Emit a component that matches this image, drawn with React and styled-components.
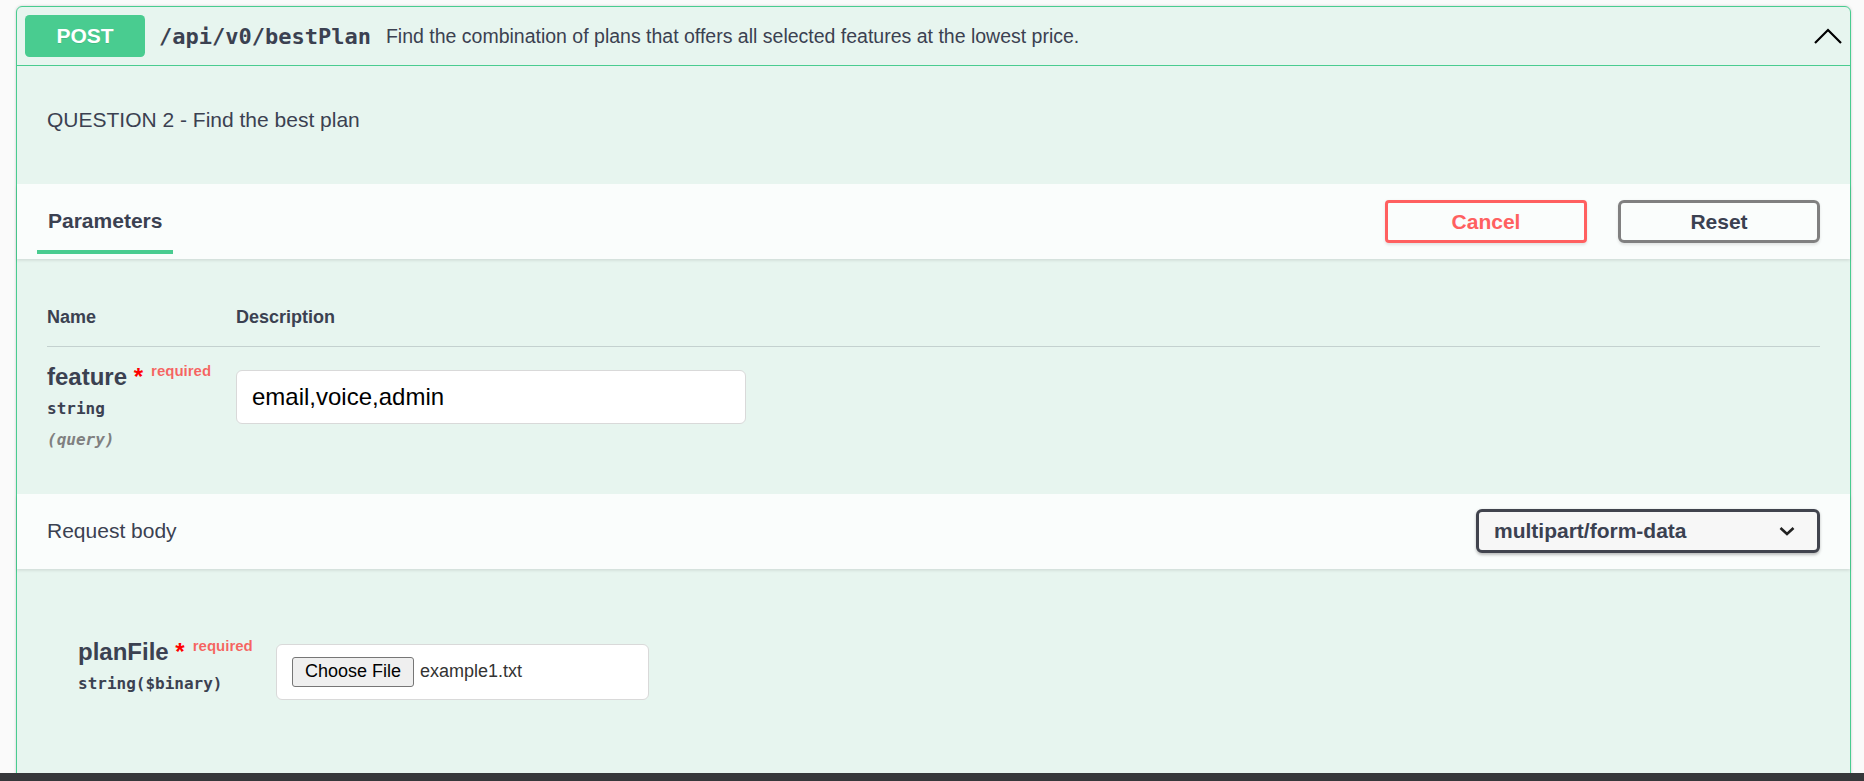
import React from 'react';
import styled, { createGlobalStyle } from 'styled-components';

const GlobalStyle = createGlobalStyle`
  html, body {
    margin: 0;
    background: #fafafa;
  }
  body {
    font-family: "Liberation Sans", Arial, sans-serif;
    color: #3b4151;
    overflow: hidden;
  }
  #root {
    padding: 6px 13px 0 16px;
  }
`;

const OpBlock = styled.div`
  border: 1px solid #49cc90;
  border-radius: 6px;
  background: rgba(73, 204, 144, 0.1);
  box-shadow: 0 0 3px rgba(0, 0, 0, 0.19);
  padding-bottom: 120px;
`;

const Summary = styled.div`
  display: flex;
  align-items: center;
  padding: 8px;
  border-bottom: 1px solid #49cc90;
`;

const Method = styled.span`
  display: flex;
  align-items: center;
  justify-content: center;
  width: 120px;
  height: 42px;
  border-radius: 4.5px;
  background: #49cc90;
  color: #fff;
  font-size: 21px;
  font-weight: 700;
  text-shadow: 0 1px 0 rgba(0, 0, 0, 0.1);
`;

const Path = styled.span`
  padding: 0 15px 0 14px;
  font-family: "DejaVu Sans Mono", "Liberation Mono", monospace;
  font-size: 22px;
  font-weight: 700;
  color: #3b4151;
`;

const SummaryText = styled.span`
  flex: 1;
  font-size: 19.5px;
  color: #3b4151;
`;

const Arrow = styled.svg`
  width: 30px;
  height: 30px;
  flex: none;
`;

const DescWrap = styled.div`
  padding: 15px 30px 22px;

  p {
    margin: 27px 0 30px;
    font-size: 21px;
    line-height: 24px;
  }
`;

const SectionHeader = styled.div`
  display: flex;
  align-items: center;
  justify-content: space-between;
  height: 75px;
  padding: ${p => (p.$tabs ? '0 30px 0 20px' : '0 30px')};
  background: rgba(255, 255, 255, 0.8);
  box-shadow: 0 1.5px 3px rgba(0, 0, 0, 0.1);
`;

const Tab = styled.div`
  align-self: stretch;
  display: flex;
  align-items: center;
  padding: 8px 11px 0;
  margin-bottom: 5px;
  border-bottom: 4px solid #49cc90;
  font-size: 21px;
  font-weight: 700;
`;

const SectionTitle = styled.span`
  font-size: 21px;
`;

const ButtonGroup = styled.div`
  display: flex;
  gap: 31px;
`;

const Btn = styled.button`
  width: 202px;
  height: 43px;
  border: 3px solid ${p => (p.$cancel ? '#ff6060' : '#808080')};
  border-radius: ${p => (p.$cancel ? '4px' : '6px')};
  background: transparent;
  color: ${p => (p.$cancel ? '#ff6060' : '#3b4151')};
  font-family: "Liberation Sans", Arial, sans-serif;
  font-size: 21px;
  font-weight: 700;
  box-shadow: 0 1.5px 3px rgba(0, 0, 0, 0.1);
  cursor: pointer;
`;

const TableWrap = styled.div`
  padding: 30px 30px 26px;
`;

const Row = styled.div`
  display: grid;
  grid-template-columns: ${p => p.$name}px 1fr;
  align-items: start;
`;

const HeadRow = styled(Row)`
  padding: 18px 0;
  border-bottom: 1px solid rgba(59, 65, 81, 0.2);
  font-size: 18px;
  font-weight: 700;
  line-height: 21px;
`;

const BodyRow = styled(Row)`
  padding: 15px 0;
`;

const NameCol = styled.div`
  display: flex;
  flex-direction: column;
`;

const ParamName = styled.div`
  font-size: 24px;
  font-weight: 700;
  line-height: 18px;
  white-space: nowrap;

  b {
    color: #f00;
  }
`;

const Required = styled.span`
  padding-left: 8px;
  font-size: 15px;
  font-weight: 700;
  color: rgba(255, 0, 0, 0.6);
  vertical-align: 9px;
`;

const ParamType = styled.div`
  padding: 12px 0 7.5px;
  font-family: "DejaVu Sans Mono", "Liberation Mono", monospace;
  font-size: 16px;
  font-weight: 700;
  line-height: 21px;
`;

const ParamIn = styled.div`
  font-family: "DejaVu Sans Mono", "Liberation Mono", monospace;
  font-size: 16px;
  font-weight: 700;
  font-style: italic;
  line-height: 26px;
  color: #808080;
`;

const TextInput = styled.input`
  box-sizing: border-box;
  width: 510px;
  height: 54px;
  margin: 7.5px 0;
  padding: 0 15px;
  border: 1px solid #d9d9d9;
  border-radius: 6px;
  background: #fff;
  font-family: "Liberation Sans", Arial, sans-serif;
  font-size: 24px;
  color: #000;
  outline: none;
`;

const Select = styled.div`
  box-sizing: border-box;
  display: flex;
  align-items: center;
  justify-content: space-between;
  width: 344px;
  height: 44px;
  padding: 0 22px 0 15px;
  border: 3px solid #41444e;
  border-radius: 6px;
  background: #f7f7f7;
  box-shadow: 0 1.5px 3px rgba(0, 0, 0, 0.25);
  font-size: 21px;
  font-weight: 700;
  color: #3b4151;
`;

const BodyWrap = styled.div`
  padding: 68px 30px 0 61px;
`;

const FileBox = styled.div`
  box-sizing: border-box;
  display: flex;
  align-items: center;
  gap: 6px;
  width: 373px;
  height: 56px;
  margin: 7px 0 7.5px;
  padding: 0 15px;
  border: 1px solid #d9d9d9;
  border-radius: 6px;
  background: #fff;
  font-size: 18px;
  color: #333;
`;

const FileButton = styled.button`
  height: 30px;
  padding: 0 12px;
  border: 1px solid #767676;
  border-radius: 3px;
  background: #efefef;
  font-family: "Liberation Sans", Arial, sans-serif;
  font-size: 18px;
  color: #000;
`;

const TaskEdge = styled.div`
  position: fixed;
  left: 0;
  right: 0;
  bottom: 0;
  height: 8px;
  background: #36373a;
`;

const Param = ({ name, type, where }) => (
  <NameCol>
    <ParamName>
      {name}<b>&nbsp;*</b>
      <Required>required</Required>
    </ParamName>
    <ParamType>{type}</ParamType>
    {where && <ParamIn>({where})</ParamIn>}
  </NameCol>
);

export default function App() {
  return (
    <>
      <GlobalStyle />
      <OpBlock>
        <Summary>
          <Method>POST</Method>
          <Path>/api/v0/bestPlan</Path>
          <SummaryText>
            Find the combination of plans that offers all selected features at the lowest price.
          </SummaryText>
          <Arrow viewBox="0 0 30 30">
            <polyline points="3,22 16,9 29,22" fill="none" stroke="#000" strokeWidth="2.2" />
          </Arrow>
        </Summary>

        <DescWrap>
          <p>QUESTION 2 - Find the best plan</p>
        </DescWrap>

        <SectionHeader $tabs>
          <Tab>Parameters</Tab>
          <ButtonGroup>
            <Btn $cancel>Cancel</Btn>
            <Btn>Reset</Btn>
          </ButtonGroup>
        </SectionHeader>

        <TableWrap>
          <HeadRow $name={189}>
            <span>Name</span>
            <span>Description</span>
          </HeadRow>
          <BodyRow $name={189}>
            <Param name="feature" type="string" where="query" />
            <TextInput defaultValue="email,voice,admin" />
          </BodyRow>
        </TableWrap>

        <SectionHeader>
          <SectionTitle>Request body</SectionTitle>
          <Select>
            multipart/form-data
            <svg width="16" height="10" viewBox="0 0 16 10">
              <polyline points="1.5,2 8,8 14.5,2" fill="none" stroke="#222" strokeWidth="2.6" />
            </svg>
          </Select>
        </SectionHeader>

        <BodyWrap>
          <Row $name={198}>
            <Param name="planFile" type="string($binary)" />
            <FileBox>
              <FileButton>Choose File</FileButton>
              <span>example1.txt</span>
            </FileBox>
          </Row>
        </BodyWrap>
      </OpBlock>
      <TaskEdge />
    </>
  );
}
